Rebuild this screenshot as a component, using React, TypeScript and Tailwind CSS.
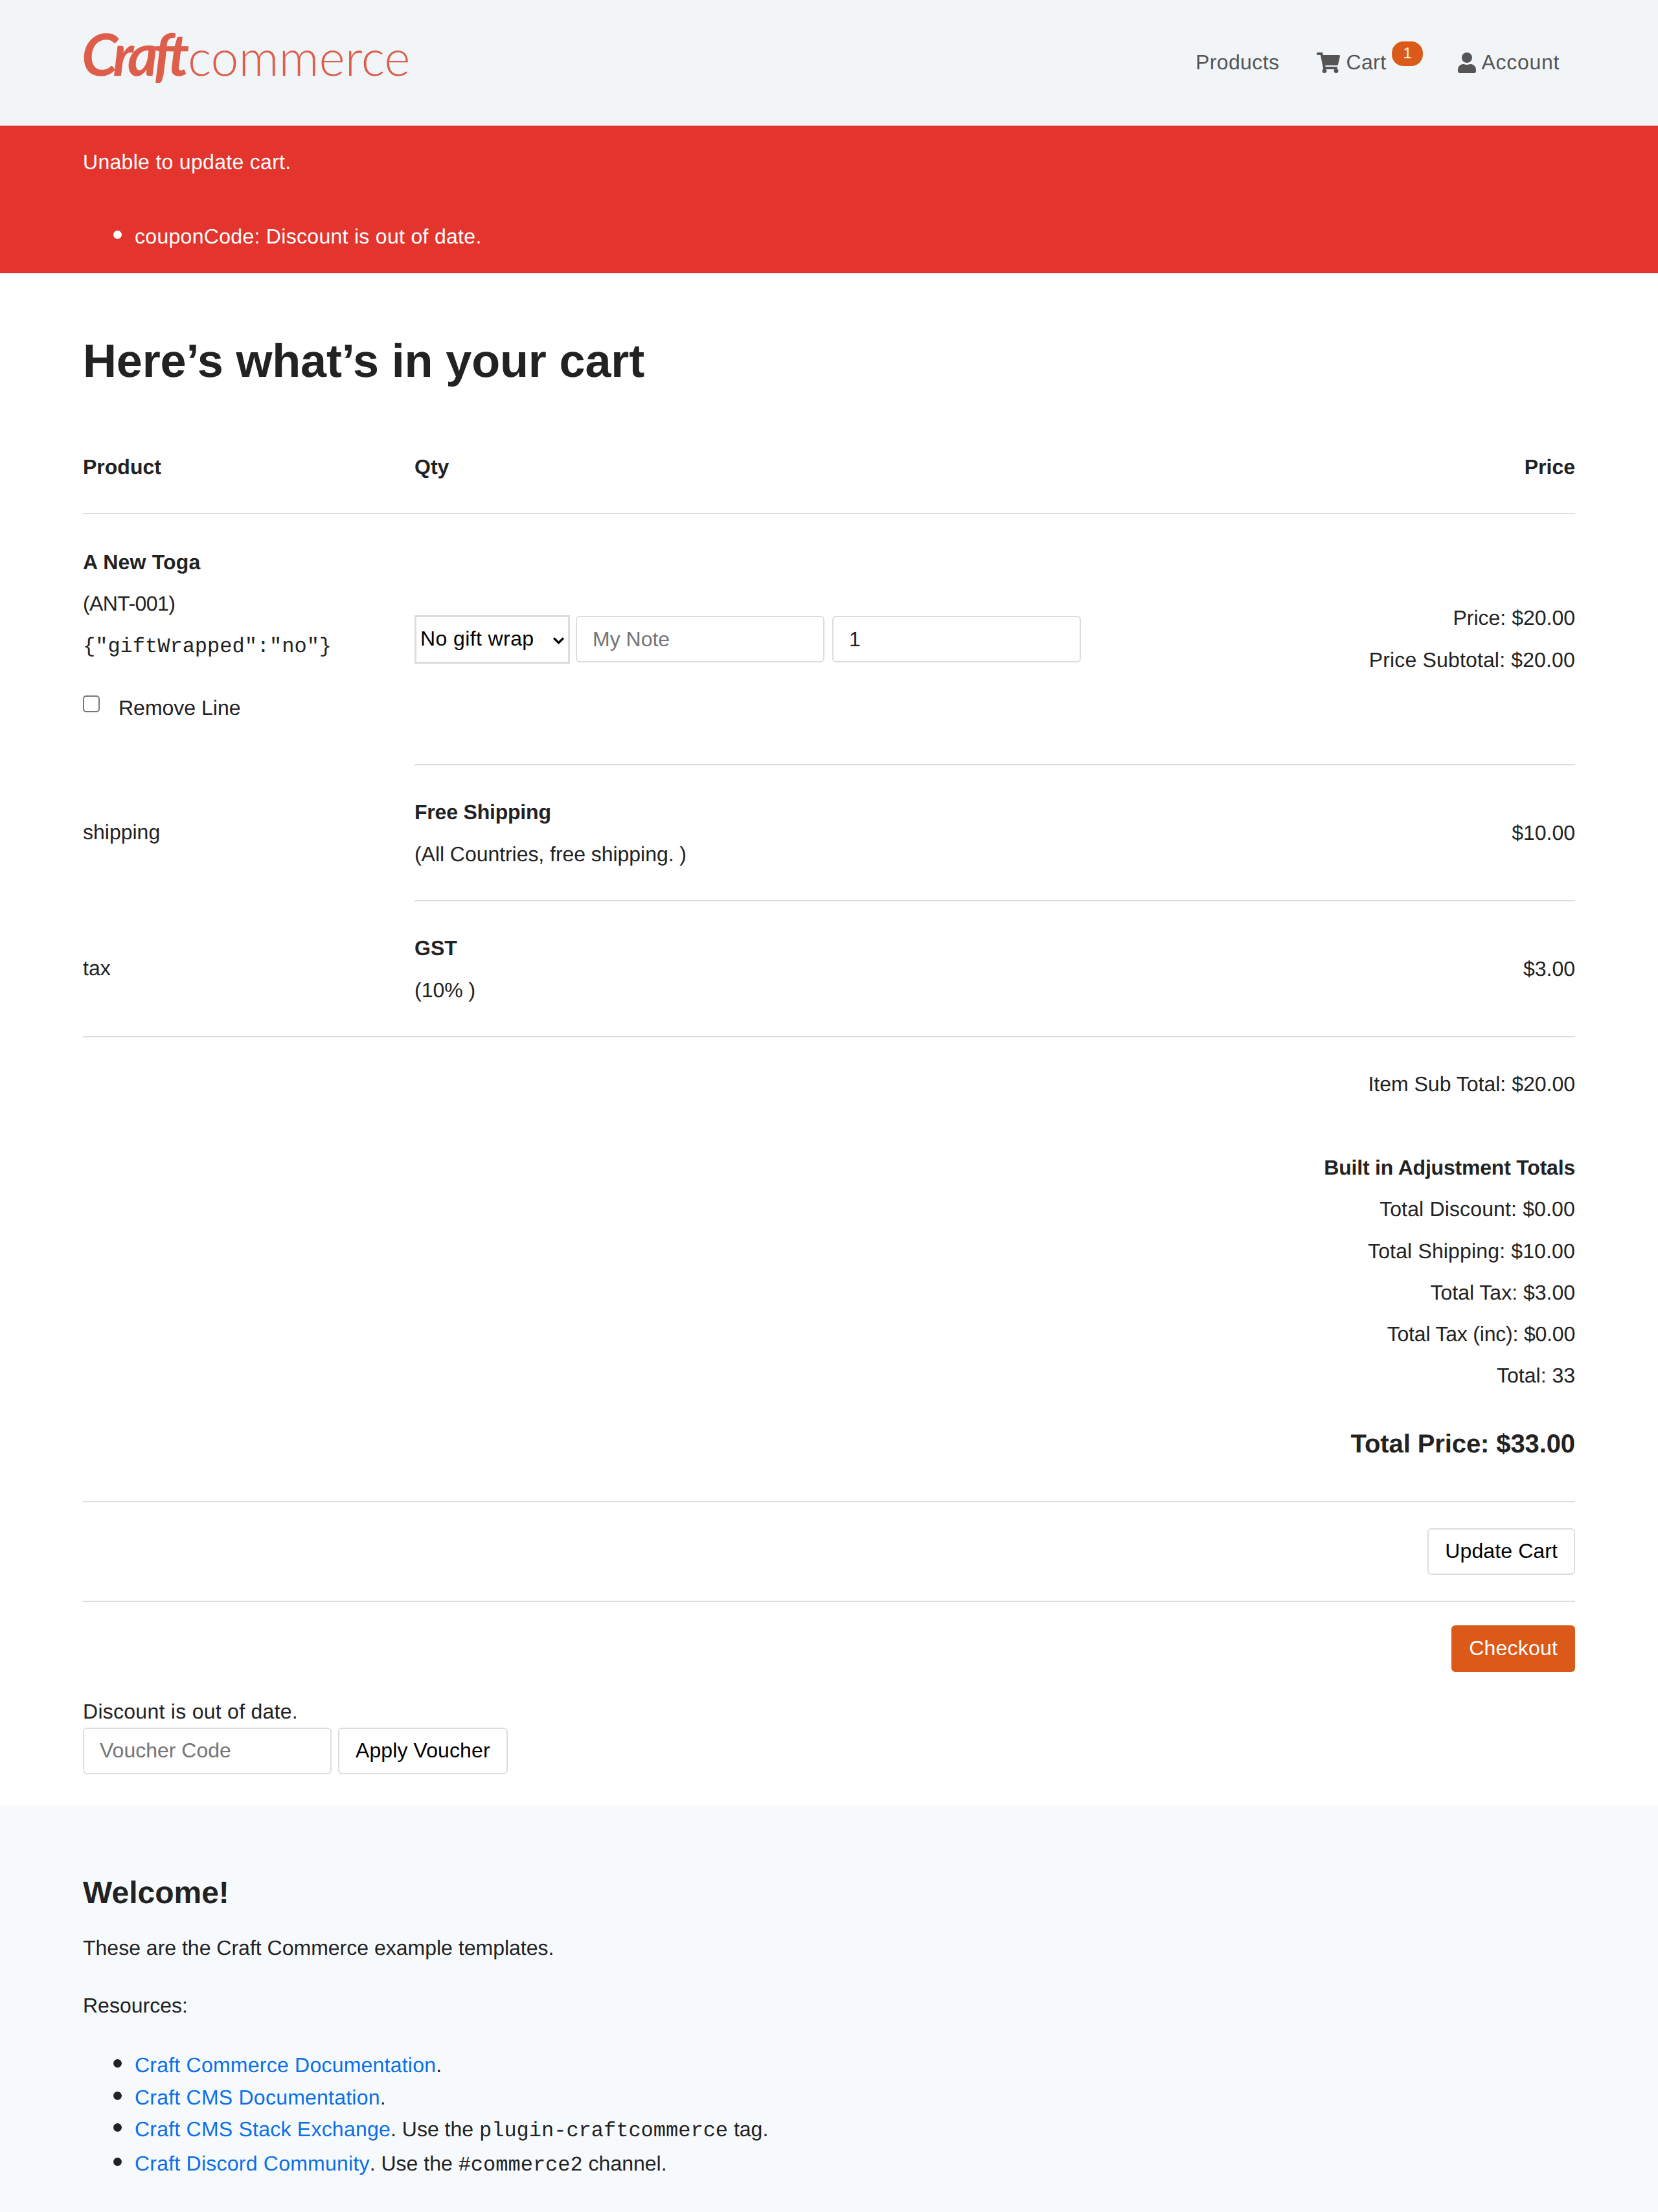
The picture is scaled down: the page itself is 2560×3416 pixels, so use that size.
import { FaShoppingCart, FaUser } from 'react-icons/fa';

const sans = 'font-["Liberation_Sans",Arial,sans-serif]';
const mono = "font-['Liberation_Mono',monospace]";

function Logo() {
  return (
    <a href="#" className="flex items-baseline text-[#de5e4b] select-none mb-[28px] ml-[-2px]">
      <span className="font-['Lato',sans-serif] font-bold italic text-[90px] leading-none tracking-[-7.2px]">Craft</span>
      <span className="font-['Lato',sans-serif] font-light text-[77px] leading-none ml-[5px]">commerce</span>
    </a>
  );
}

function Nav() {
  return (
    <nav className="flex items-center text-[#555] pr-[24px] tracking-[0.4px]">
      <a href="#">Products</a>
      <a href="#" className="flex items-center ml-[58px]">
        <FaShoppingCart className="w-[36px] h-[32px]" />
        <span className="ml-[9px]">Cart</span>
        <span className="ml-[9px] mt-[-28px] w-[48px] h-[38px] rounded-[18px] bg-[#dc5a19] text-white text-[24px] leading-[38px] text-center">1</span>
      </a>
      <a href="#" className="flex items-center ml-[54px]">
        <FaUser className="w-[28px] h-[32px]" />
        <span className="ml-[8px] tracking-[0.7px]">Account</span>
      </a>
    </nav>
  );
}

function TextInput({ placeholder, value }: { placeholder?: string; value?: string }) {
  return (
    <input
      type="text"
      placeholder={placeholder}
      defaultValue={value}
      className="w-[384px] h-[72px] border-2 border-[#ddd] rounded-[6px] px-[24px] bg-white placeholder:text-[#757575]"
    />
  );
}

function Btn({ label, primary }: { label: string; primary?: boolean }) {
  return (
    <button
      className={
        primary
          ? 'h-[72px] px-[27px] rounded-[6px] bg-[#dc5a19] text-white tracking-[0.2px]'
          : 'h-[72px] px-[25px] rounded-[6px] border-2 border-[#ddd] bg-white text-black tracking-[0.1px]'
      }
    >
      {label}
    </button>
  );
}

const TOTALS = [
  { label: 'Total Discount: $0.00', cls: 'tracking-[0.15px]' },
  { label: 'Total Shipping: $10.00', cls: 'tracking-[0.15px]' },
  { label: 'Total Tax: $3.00', cls: '' },
  { label: 'Total Tax (inc): $0.00', cls: 'tracking-[-0.2px]' },
  { label: 'Total: 33', cls: '' },
];

export default function App() {
  return (
    <div className={`${sans} flex flex-col text-[32px] leading-[51.2px] text-[#222] bg-white min-h-[3416px] [text-rendering:geometricPrecision]`}>
      {/* Header */}
      <header className="h-[194px] bg-[#f1f5f8] flex items-center justify-between px-[128px]">
        <Logo />
        <Nav />
      </header>

      {/* Error flash */}
      <div className="h-[228px] bg-[#e3352e] text-white px-[128px] pt-[31px] tracking-[0.3px]">
        <p>Unable to update cart.</p>
        <ul className="list-disc marker:text-[44px] pl-[80px] mt-[60px]">
          <li>couponCode: Discount is out of date.</li>
        </ul>
      </div>

      {/* Cart */}
      <main className="px-[128px] pt-[88px]">
        <h1 className="font-bold text-[72px] leading-[96px] mb-[90px] tracking-[-0.15px]">Here’s what’s in your cart</h1>

        <div className="flex justify-between font-bold border-b-2 border-[#ddd] h-[98px]">
          <div className="flex">
            <span className="w-[512px]">Product</span>
            <span>Qty</span>
          </div>
          <span>Price</span>
        </div>

        <div className="flex items-center h-[386px]">
          <div className="w-[512px] pb-[12px]">
            <p className="font-bold mb-[13px] tracking-[0.2px]">A New Toga</p>
            <p className="mb-[13px] tracking-[-0.6px]">(ANT-001)</p>
            <p className={`${mono} text-[32px] pt-[2px]`}>{'{"giftWrapped":"no"}'}</p>
            <label className="flex items-center mt-[44px]">
              <input type="checkbox" className="w-[26px] h-[26px] appearance-none border-2 border-[#767676] rounded-[5px] mt-[-13px] bg-white" />
              <span className="ml-[29px]">Remove Line</span>
            </label>
          </div>
          <div className="flex-1 flex items-center">
            <div className="relative mr-[9px]">
              <select className="appearance-none w-[240px] h-[75px] border-[3px] border-[#ddd] bg-white text-black pl-[6px] tracking-[0.4px]">
                <option>No gift wrap</option>
              </select>
              <svg viewBox="0 0 20 14" className="absolute right-[8px] top-[33px] w-[19px] h-[13px] pointer-events-none" fill="none" stroke="#000" strokeWidth="3.6">
                <path d="M2 2.5l8 8 8-8" />
              </svg>
            </div>
            <TextInput placeholder="My Note" />
            <div className="w-[12px]" />
            <TextInput value="1" />
          </div>
          <div className="text-right">
            <p className="mb-[13px]">Price: $20.00</p>
            <p className="tracking-[0.15px]">Price Subtotal: $20.00</p>
          </div>
        </div>

        <div className="flex items-center">
          <div className="w-[512px]">shipping</div>
          <div className="flex-1 flex items-center justify-between border-t-2 border-b-2 border-[#ddd] h-[212px]">
            <div className="pt-[2px]">
              <p className="font-bold mb-[13px] tracking-[-0.2px]">Free Shipping</p>
              <p className="tracking-[-0.05px]">(All Countries, free shipping. )</p>
            </div>
            <span className="pt-[2px]">$10.00</span>
          </div>
        </div>

        <div className="flex items-center border-b-2 border-[#ddd]">
          <div className="w-[512px]">tax</div>
          <div className="flex-1 flex items-center justify-between h-[208px]">
            <div className="pt-[2px]">
              <p className="font-bold mb-[13px]">GST</p>
              <p>(10% )</p>
            </div>
            <span className="pt-[2px]">$3.00</span>
          </div>
        </div>

        {/* Totals */}
        <div className="text-right pt-[47px] pb-[61px] border-b-2 border-[#ddd]">
          <p>Item Sub Total: $20.00</p>
          <p className="font-bold mt-[78px] mb-[13px] tracking-[-0.2px]">Built in Adjustment Totals</p>
          {TOTALS.map(t => (
            <p key={t.label} className={`mb-[13px] ${t.cls}`}>{t.label}</p>
          ))}
          <p className="font-bold text-[40px] mt-[55px] tracking-[-0.1px]">Total Price: $33.00</p>
        </div>

        <div className="flex justify-end items-center h-[154px] border-b-2 border-[#ddd]">
          <Btn label="Update Cart" />
        </div>

        <div className="flex justify-end pt-[36px]">
          <Btn label="Checkout" primary />
        </div>

        <div className="mt-[36px]">
          <p className="tracking-[0.27px]">Discount is out of date.</p>
          <div className="flex gap-[10px] mt-[-1px]">
            <TextInput placeholder="Voucher Code" />
            <Btn label="Apply Voucher" />
          </div>
        </div>
      </main>

      {/* Footer */}
      <footer className="grow mt-[48px] bg-[#f7fafc] px-[128px] pt-[104px]">
        <h3 className="font-bold text-[48px] leading-[64px] mb-[29px]">Welcome!</h3>
        <p className="mb-[38px] mt-[-2px]">These are the Craft Commerce example templates.</p>
        <p className="mb-[40px]">Resources:</p>
        <ul className="list-disc marker:text-[44px] pl-[80px] leading-[46.5px]">
          <li><a href="#" className="text-[#0b6fe8] tracking-[0.23px]">Craft Commerce Documentation</a>.</li>
          <li><a href="#" className="text-[#0b6fe8] tracking-[0.23px]">Craft CMS Documentation</a>.</li>
          <li><a href="#" className="text-[#0b6fe8] tracking-[0.23px]">Craft CMS Stack Exchange</a>. Use the <code className={`${mono} text-[32px]`}>plugin-craftcommerce</code> tag.</li>
          <li><a href="#" className="text-[#0b6fe8] tracking-[0.23px]">Craft Discord Community</a>. Use the <code className={`${mono} text-[32px]`}>#commerce2</code> channel.</li>
        </ul>
      </footer>
    </div>
  );
}
